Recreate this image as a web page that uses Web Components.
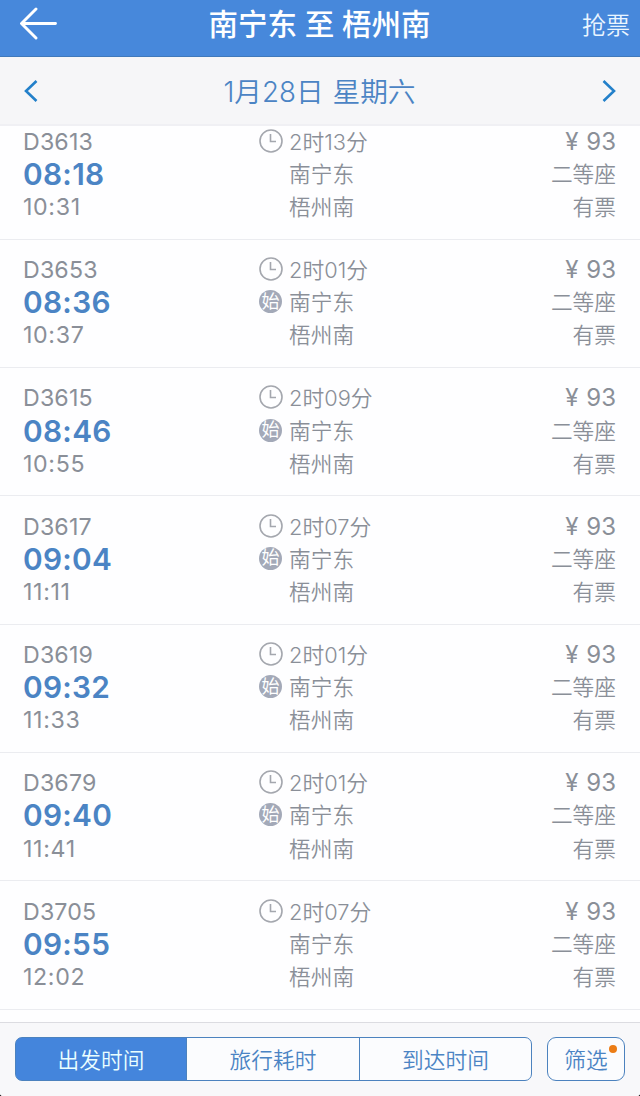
<!DOCTYPE html>
<html lang="zh-CN">
<head>
<meta charset="utf-8">
<title>车票查询</title>
<style>
html,body{margin:0;height:100%;overflow:hidden;background:#000}
body{font-family:Inter,"Noto Sans CJK SC",sans-serif}
</style>
</head>
<body>
<ticket-app></ticket-app>
<script>
const define = (name, css, html) => customElements.define(name, class extends HTMLElement {
  constructor() {
    super();
    this.attachShadow({ mode: 'open' }).innerHTML =
      '<style>*{box-sizing:border-box}' + css + '</style>' + (typeof html === 'function' ? html(this) : html);
  }
});

define('title-bar', `
:host{display:grid;grid-template-columns:110px 1fr 110px;align-items:center;height:57px;padding-bottom:9px;box-sizing:border-box;background:#4788db;border-bottom:1px solid #4079bb;color:#fff}
svg{display:block;margin-left:19px}
.title{font-size:29.5px;font-weight:500;line-height:40px;text-align:center;white-space:pre;padding-right:1px}
.action{font-size:24px;line-height:40px;font-weight:350;text-align:right;padding-right:10px;color:#eaf5ff;padding-top:4px}
`, `<svg width="40" height="34" viewBox="0 0 40 34" fill="none" stroke="#fff" stroke-width="2.9" stroke-linecap="round" stroke-linejoin="round"><path d="M17 2 2.5 16.500 17 31M3 16.500H36.500"/></svg>
<div class="title"><slot></slot></div><div class="action"><slot name="action"></slot></div>`);

define('date-bar', `
:host{display:flex;justify-content:space-between;align-items:center;height:69px;padding:0 23px;box-sizing:border-box;background:#f6f6f8;border-bottom:2px solid #f0f0f4;color:#4b84c4}
svg{display:block}
.d{font-size:27.7px;line-height:40px;font-weight:350;white-space:pre;padding:2px 1px 0 0;word-spacing:1px}
`, `<svg width="16" height="24" viewBox="0 0 16 24" fill="none" stroke="#2380ca" stroke-width="2.6"><path d="M13.500 2 3 12 13.500 22"/></svg>
<div class="d"><slot></slot></div>
<svg width="16" height="24" viewBox="0 0 16 24" fill="none" stroke="#2380ca" stroke-width="2.6"><path d="M2.500 2 13 12 2.500 22"/></svg>`);

define('clock-icon', ':host{display:block;width:24px;height:24px}svg{display:block}',
  '<svg width="24" height="24" viewBox="0 0 24 24" fill="none" stroke="#a4a7ae" stroke-width="1.6"><circle cx="12" cy="12" r="11"/><path d="M11.500 5V12.500H17"/></svg>');

define('origin-badge', ':host{display:flex;align-items:center;justify-content:center;width:23px;height:23px;border-radius:50%;background:#a3a9b8;color:#fff;font-size:18px;line-height:22px;font-weight:400}', '<slot></slot>');

define('train-row', `
:host{display:grid;grid-template-columns:236px 1fr 120px;height:128.33px;box-sizing:border-box;padding:14.300px 24px 0 23px;border-bottom:1px solid #ebecf0;background:#fefeff;color:#8a8f98;font-size:21.7px;font-weight:350}
.col{display:grid;grid-template-rows:32.200px 33.200px 32.700px;align-content:start;line-height:32px;white-space:nowrap}
.no,.arr{font-size:23.2px;letter-spacing:.15px;font-weight:400}
.arr{letter-spacing:.65px}
.dep{font-size:29.8px;font-weight:600;color:#4b84c4;letter-spacing:.3px}
.mid{grid-template-columns:30px 1fr}
clock-icon{margin-top:3px}
origin-badge{margin-top:4px}
.dur{font-size:21.8px}
.right{text-align:right}.price{font-size:24px;word-spacing:1px;font-weight:400}
`, el => {
  const a = n => el.getAttribute(n);
  return `<div class="col"><span class="no">${a('no')}</span><span class="dep">${a('dep')}</span><span class="arr">${a('arr')}</span></div>
<div class="col mid"><clock-icon></clock-icon><span class="dur">${a('dur')}</span>${el.hasAttribute('origin') ? '<origin-badge>始</origin-badge>' : '<i></i>'}<span>南宁东</span><i></i><span>梧州南</span></div>
<div class="col right"><span class="price">¥ 93</span><span>二等座</span><span>有票</span></div>`;
});

define('sort-bar', `
:host{display:flex;gap:15px;height:74px;padding:14px 15px 0;box-sizing:border-box;background:#f8f8fa;border-top:1px solid #dcdce1;color:#4b84c4;font-size:21.7px;font-weight:350}
.seg{display:grid;grid-template-columns:170px 173px 1fr;width:517px;height:44px;border:1px solid #4c82be;border-radius:7px;overflow:hidden;background:linear-gradient(90deg,#4485dc 60px,#fbfcfe 0)}
.seg span{display:flex;align-items:center;justify-content:center;border-left:1px solid #4c82be;padding-bottom:2px}
.seg .on{background:#4485dc;color:#eaffff;border:0}
.filter{display:flex;align-items:center;justify-content:center;position:relative;width:78px;height:44px;padding-bottom:2px;border:1px solid #4c82be;border-radius:9px;background:#fbfcfe}
.dot{position:absolute;right:7px;top:7px;width:8px;height:8px;border-radius:50%;background:#ec7d16}
`, `<div class="seg"><span class="on">出发时间</span><span>旅行耗时</span><span>到达时间</span></div><div class="filter"><slot></slot><i class="dot"></i></div>`);

const trains = [
  ['D3613','08:18','10:31','2时13分',0],
  ['D3653','08:36','10:37','2时01分',1],
  ['D3615','08:46','10:55','2时09分',1],
  ['D3617','09:04','11:11','2时07分',1],
  ['D3619','09:32','11:33','2时01分',1],
  ['D3679','09:40','11:41','2时01分',1],
  ['D3705','09:55','12:02','2时07分',0]
];
define('ticket-app', `
:host{display:flex;flex-direction:column;width:640px;height:1096px;background:#fff;border-radius:0 0 3px 3px;overflow:hidden}
title-bar,date-bar,sort-bar{flex:none}
.list{flex:1;min-height:0;overflow:hidden;background:#fefeff}
.list train-row:first-child{height:113.700px;padding-top:0}
`, `<title-bar>南宁东 至 梧州南<span slot="action">抢票</span></title-bar>
<date-bar>1月28日 星期六</date-bar>
<div class="list">${trains.map(t => `<train-row no="${t[0]}" dep="${t[1]}" arr="${t[2]}" dur="${t[3]}"${t[4] ? ' origin' : ''}></train-row>`).join('')}</div>
<sort-bar>筛选</sort-bar>`);
</script>
</body>
</html>
